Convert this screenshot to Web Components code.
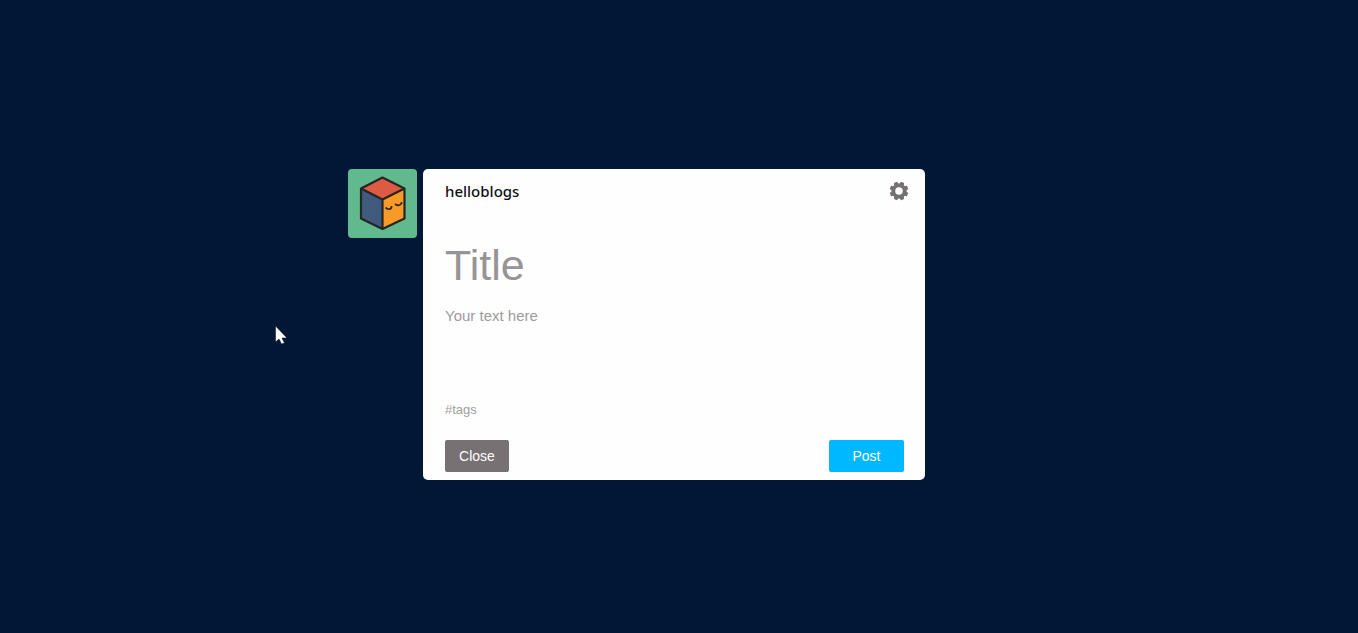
<!DOCTYPE html>
<html lang="en">
<head>
<meta charset="utf-8">
<title>New post</title>
<style>
html, body { margin: 0; height: 100%; }
body { background: #001735; font-family: "Liberation Sans", Arial, sans-serif; }
</style>
</head>
<body>
<post-page></post-page>
<script>
const define = (name, html, setup) => customElements.define(name, class extends HTMLElement {
  constructor() {
    super();
    this.attachShadow({ mode: "open" }).innerHTML = html;
  }
  connectedCallback() { if (setup) setup(this, this.shadowRoot); }
});

define("blog-avatar", `
<style>
:host { display: block; width: 69px; height: 69px; flex: none; border-radius: 4px; overflow: hidden; background: #60ba8d; }
svg { display: block; width: 100%; height: 100%; }
</style>
<svg viewBox="0 0 69 69" role="img" aria-label="Blog avatar">
  <path d="M34.500 8.500 56.500 19.500 34.500 30.500 13 19.500Z" fill="#dc5b42"/>
  <path d="M13 19.500 34.500 30.500V60L13 49.500Z" fill="#405b7e"/>
  <path d="M56.500 19.500 34.500 30.500V60L56.500 49.500Z" fill="#f79a28"/>
  <path d="M34.500 8.500 56.500 19.500V49.500L34.500 60 13 49.500V19.500ZM13 19.500 34.500 30.500 56.500 19.500M34.500 30.500V60" fill="none" stroke="#252525" stroke-width="2.200" stroke-linejoin="round"/>
  <path d="M37.500 38.500Q41.500 42 43.500 38.500V37M47 35Q51 38 53.500 34.500V33" fill="none" stroke="#30251c" stroke-width="1.700"/>
</svg>`);

define("post-button", `
<style>
:host { display: block; }
button { display: block; box-sizing: border-box; width: 100%; height: 32px; margin: 0; padding: 0; border: 0; border-radius: 2px; background: var(--fill); color: #fff; font: 14px/32px "Liberation Sans", Arial, sans-serif; text-align: center; cursor: pointer; }
</style>
<button type="button"><slot></slot></button>`);

define("post-field", `
<style>
:host { display: block; }
input, textarea { display: block; box-sizing: border-box; width: 100%; height: var(--height); margin: 0; padding: 0; border: 0; outline: 0; resize: none; overflow: hidden; background: transparent; color: #333; font: var(--size)/var(--line) "Liberation Sans", Arial, sans-serif; }
::placeholder { color: var(--hint); opacity: 1; }
</style>`, (host, root) => {
  const field = document.createElement(host.hasAttribute("multiline") ? "textarea" : "input");
  field.placeholder = host.getAttribute("hint");
  field.setAttribute("aria-label", host.getAttribute("hint"));
  root.append(field);
});

define("settings-button", `
<style>
:host { display: block; }
button { display: block; width: 20px; height: 20px; margin: 0; padding: 0; border: 0; background: none; cursor: pointer; }
svg { display: block; }
</style>
<button type="button" aria-label="Settings">
  <svg width="20" height="20" viewBox="-10 -10 20 20">
    <g id="teeth" fill="#757173"></g>
    <circle r="5.700" fill="none" stroke="#757173" stroke-width="3.800"/>
  </svg>
</button>`, (host, root) => {
  const teeth = root.getElementById("teeth");
  teeth.innerHTML = Array.from({ length: 8 }, (_, i) =>
    `<path d="M-2.400-6.500-1.700-9.300H1.700L2.400-6.500Z" transform="rotate(${i * 45 + 22.5})"/>`).join("");
});

define("post-card", `
<style>
:host { display: block; box-sizing: border-box; width: 502px; max-width: 100%; padding: 12px 21px 8px 22px; border-radius: 5px; background: #fefefe; }
header, footer { display: flex; justify-content: space-between; }
header { height: 20px; margin-right: -5px; }
h1 { margin: 0; color: #101114; font: 500 15px/20px "Noto Sans", "Open Sans", sans-serif; }
.title { --size: 43px; --line: 48px; --height: 48px; --hint: #969496; margin-top: 40px; }
.text { --size: 15px; --line: 20px; --height: 80px; --hint: #9d9b9d; margin-top: 17px; }
.tags { --size: 13px; --line: 16px; --height: 16px; --hint: #a09ea0; margin-top: 16px; }
footer { margin-top: 22px; }
.close { --fill: #787173; width: 64px; }
.post { --fill: #00b8ff; width: 75px; }
</style>
<header><h1>helloblogs</h1><settings-button></settings-button></header>
<post-field class="title" hint="Title"></post-field>
<post-field class="text" hint="Your text here" multiline></post-field>
<post-field class="tags" hint="#tags"></post-field>
<footer>
  <post-button class="close">Close</post-button>
  <post-button class="post">Post</post-button>
</footer>`);

define("mouse-pointer", `
<style>
:host { position: absolute; left: 274px; top: 325px; pointer-events: none; }
svg { display: block; }
</style>
<svg width="14" height="21" viewBox="0 0 14 21" aria-hidden="true">
  <path d="M1.500 1V17L5 14 7.500 19 10.500 18 8 13H13Z" fill="#fff" stroke="#000a1c" stroke-width=".500"/>
</svg>`);

define("post-page", `
<style>
:host { display: flex; box-sizing: border-box; min-height: 100%; align-items: center; justify-content: center; padding: 16px 85px 0 0; }
main { display: flex; align-items: flex-start; gap: 6px; }
</style>
<main><blog-avatar></blog-avatar><post-card></post-card></main>
<mouse-pointer></mouse-pointer>`);
</script>
</body>
</html>
